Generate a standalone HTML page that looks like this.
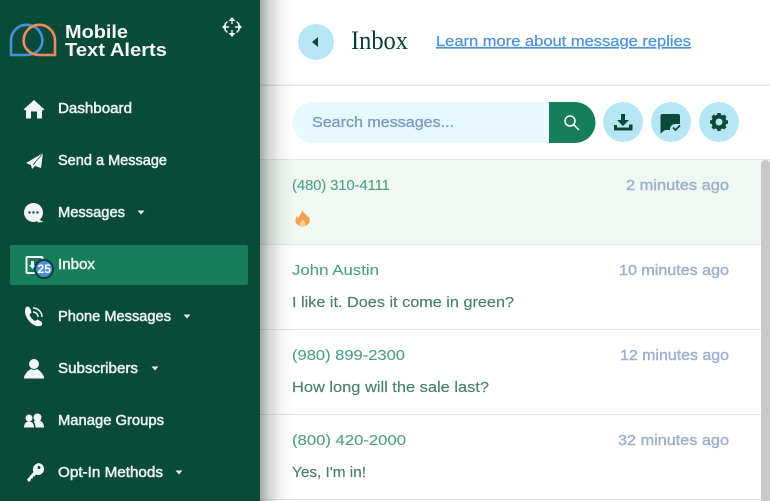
<!DOCTYPE html>
<html><head><meta charset="utf-8"><style>
html,body{margin:0;padding:0;width:770px;height:501px;overflow:hidden;background:#fff}
svg{display:block}
text{font-family:"Liberation Sans",sans-serif}
.m{font-size:15px;fill:#e9f1ee;stroke:#e9f1ee;stroke-width:.55px}
.n{font-size:15px;fill:#4f9f88;stroke:#4f9f88;stroke-width:.1px}
.t{font-size:15px;fill:#9db0cc;stroke:#9db0cc;stroke-width:.4px}
.b{font-size:15px;fill:#4a7d6e;stroke:#4a7d6e;stroke-width:.15px}
</style></head><body>
<svg width="770" height="501" viewBox="0 0 770 501" xmlns="http://www.w3.org/2000/svg">
<defs><linearGradient id="s" x1="0" x2="1" y1="0" y2="0">
<stop offset="0" stop-color="#000" stop-opacity=".34"/><stop offset=".25" stop-color="#000" stop-opacity=".18"/><stop offset=".6" stop-color="#000" stop-opacity=".05"/><stop offset="1" stop-color="#000" stop-opacity="0"/></linearGradient></defs>
<rect width="770" height="501" fill="#fff"/>
<!-- header -->
<circle cx="316" cy="42" r="18" fill="#b6e6f3"/>
<path d="M312 42l6-5v10z" fill="#0a4a38"/>
<text x="351" y="49" font-size="26" textLength="57" lengthAdjust="spacingAndGlyphs" style='font-family:"Liberation Serif",serif' fill="#0a3f33">Inbox</text>
<text x="436" y="46" font-size="15" textLength="255" lengthAdjust="spacingAndGlyphs" fill="#4f93d8" stroke="#4f93d8" stroke-width=".25" text-decoration="underline">Learn more about message replies</text>
<rect x="260" y="84.5" width="510" height="1.5" fill="#e3e8e6"/>
<!-- search -->
<path d="M313 102H549V143H313a20.500 20.500 0 0 1 0-41z" fill="#e6f9fe"/>
<text x="312" y="127" font-size="15" textLength="142" lengthAdjust="spacingAndGlyphs" fill="#7d9bbd" stroke="#7d9bbd" stroke-width=".35">Search messages...</text>
<path d="M549 102h26a20.500 20.500 0 0 1 0 41h-26z" fill="#177e5c"/>
<circle cx="570" cy="121" r="5" fill="none" stroke="#fff" stroke-width="1.500"/>
<path d="M574 125l5 5" stroke="#fff" stroke-width="1.500"/>
<circle cx="623" cy="122" r="20" fill="#b6e6f3"/>
<circle cx="671" cy="122" r="20" fill="#b6e6f3"/>
<circle cx="719" cy="122" r="20" fill="#b6e6f3"/>
<path d="M621 114h4v6h4l-6 6-6-6h4zM614 125h3v2.500h12v-3h3.500v6h-18.500z" fill="#0a4a38"/>
<path d="M664 114h14a2 2 0 0 1 2 2v8h-5a5 5 0 0 0-5 5v1h-5l-4.500 3.500v-17.500a2 2 0 0 1 2-2z" fill="#0a4a38"/>
<path d="M673 127.500l2.500 2.500 4.500-4.500" fill="none" stroke="#0a4a38" stroke-width="1.700"/>
<circle cx="719" cy="122" r="5.500" fill="none" stroke="#0a4a38" stroke-width="4"/>
<g stroke="#0a4a38" stroke-width="3.500"><path d="M719 113v3M719 128v3M710 122h3M725 122h3M712.600 115.600l2 2M723.400 126.400l2 2M725.400 115.600l-2 2M714.600 126.400l-2 2"/></g>
<!-- rows -->
<rect x="260" y="159" width="510" height="1" fill="#e3e5e5"/>
<rect x="260" y="160" width="510" height="84" fill="#f0f8f2"/>
<g fill="#e3e7e7"><rect x="260" y="244" width="510" height="1"/><rect x="260" y="329" width="510" height="1"/><rect x="260" y="414" width="510" height="1"/><rect x="260" y="499" width="510" height="1"/></g>
<text class="n" x="292" y="190" textLength="98" lengthAdjust="spacing">(480) 310-4111</text>
<text class="t" x="626" y="190" textLength="103" lengthAdjust="spacingAndGlyphs">2 minutes ago</text>
<path d="M302 210c1 3 5 4 6 8 .6-.6 .8-1.500 .8-2 1 2 1.200 4 .7 6a7.300 6 0 0 1-14 0c-.4-2 .3-4 1.500-6 0 1 .6 2 1 2.500 1-3 4-5 4-8.500z" fill="#f2a04f"/>
<path d="M303 219c0 2 2.500 3 2.500 5a3 3 0 0 1-6 0c0-2 3-2.500 3.500-5z" fill="#f9d48a"/>
<text class="n" x="292" y="275" textLength="87" lengthAdjust="spacingAndGlyphs">John Austin</text>
<text class="t" x="619" y="275" textLength="110" lengthAdjust="spacingAndGlyphs">10 minutes ago</text>
<text class="b" x="292" y="307" textLength="222" lengthAdjust="spacingAndGlyphs">I like it. Does it come in green?</text>
<text class="n" x="292" y="360" textLength="113" lengthAdjust="spacingAndGlyphs">(980) 899-2300</text>
<text class="t" x="620" y="360" textLength="109" lengthAdjust="spacingAndGlyphs">12 minutes ago</text>
<text class="b" x="292" y="392" textLength="197" lengthAdjust="spacingAndGlyphs">How long will the sale last?</text>
<text class="n" x="292" y="445" textLength="114" lengthAdjust="spacingAndGlyphs">(800) 420-2000</text>
<text class="t" x="618" y="445" textLength="111" lengthAdjust="spacingAndGlyphs">32 minutes ago</text>
<text class="b" x="292" y="477" textLength="74" lengthAdjust="spacingAndGlyphs">Yes, I'm in!</text>
<path d="M761 501V164a4 4 0 0 1 4-4h1a4 4 0 0 1 4 4v337z" fill="#c9c9c9"/>
<!-- shadow -->
<rect x="260" y="0" width="34" height="501" fill="url(#s)"/>
<!-- sidebar -->
<rect width="260" height="501" fill="#0a4a38"/>
<path d="M11 55V40.500a15.700 15.700 0 0 1 31.400 0 15.700 14.500 0 0 1-15.700 14.500z" fill="none" stroke="#4a90d9" stroke-width="2.600"/>
<path d="M55 55V40.500a15.700 15.700 0 0 0-31.400 0 15.700 14.500 0 0 0 15.700 14.500z" fill="none" stroke="#f28a62" stroke-width="2.600"/>
<text x="65" y="38" font-size="18.500" font-weight="700" fill="#f5f7f2" textLength="63" lengthAdjust="spacingAndGlyphs">Mobile</text>
<text x="65" y="56" font-size="18.500" font-weight="700" fill="#f5f7f2" textLength="102" lengthAdjust="spacingAndGlyphs">Text Alerts</text>
<g fill="none" stroke="#e9f1ee" stroke-width="1.400"><path d="M232 21v3M232 30v3M226 27h3M235 27h3M227.500 21.500l-3 3M236.500 21.500l3 3M227.500 32.500l-3-3M236.500 32.500l3-3"/></g>
<g fill="#e9f1ee"><path d="M232 17l3.500 4h-7zM232 37l3.500-4h-7zM222 27l4-3.500v7zM242 27l-4-3.500v7z"/></g>
<rect x="10" y="245" width="238" height="40" rx="2" fill="#177e5c"/>
<!-- icons -->
<g fill="#f1f6f4">
<path d="M34 100l10.500 9.500-2.500 1V118.500h-5v-7h-6v7h-5v-8l-2.500-1z"/>
<path d="M43 153l-17 10 5 2 1 4 3-3 6 2z"/>
<circle cx="33.500" cy="212.500" r="9.500"/><path d="M38 219l5.500 3-6 .5z"/>
<circle cx="34" cy="364" r="5"/><path d="M24 378.500c0-1 0-2 1-3.500 1.500-3 4-5 6-6a6 6 0 0 0 6 0c2 1 4.500 3 6 6 1 1.500 1 2.500 1 3.500z"/>
<circle cx="29" cy="418" r="3.500"/><circle cx="37.500" cy="417.500" r="4"/>
<path d="M24 427.500c0-4 2-6 5-6s5 2 5 6z"/><path d="M35.500 427.500c0-3-1-5-2-6 1-.6 3-1 4.500-1 4 0 6 3 6 7z"/>
<path fill-rule="evenodd" d="M37.500 463a6 6 0 0 1 1 12c-1 0-2-.3-2.500-.5l-1.500 2-1.500 0-.3 2-1.700.3-.3 1.700-2 1.500-1.700-2.500 6.500-7.500a6 6 0 0 1 4-8.500zM39 466a1.500 1.500 0 1 0 .01 0z"/>
<path d="M26 307c2-1 3.500 0 4.500 2l1 3.500-2 2c1 3 3 5 5.500 6.500l2.500-1.500 3.500 2c1.500 1 1.500 3 .5 4-8 4-20-10-15.500-18.500z"/>
</g>
<path d="M43 153l-10 12" stroke="#0a4a38" stroke-width=".7"/>
<g fill="none" stroke="#f1f6f4" stroke-width="1.500"><path d="M33 308a9 9 0 0 1 9 9M33 312a5 5 0 0 1 5 5"/></g>
<rect x="26.500" y="257" width="16" height="16" rx="1" fill="none" stroke="#f1f6f4" stroke-width="2"/>
<path d="M31 261h3v4h2l-3.500 4-3.500-4h2z" fill="#f1f6f4"/>
<g fill="#0a4a38"><circle cx="29.500" cy="212.500" r="1.200"/><circle cx="33.500" cy="212.500" r="1.200"/><circle cx="37.500" cy="212.500" r="1.200"/></g>
<circle cx="44" cy="269" r="9" fill="#4a90d9" stroke="#0f3f3a" stroke-width="2"/>
<text x="37.500" y="273" font-size="11.500" font-weight="700" fill="#fff" textLength="13.500" lengthAdjust="spacingAndGlyphs">25</text>
<!-- menu -->
<text class="m" x="58" y="113" textLength="74" lengthAdjust="spacingAndGlyphs">Dashboard</text>
<text class="m" x="58" y="165" textLength="109" lengthAdjust="spacingAndGlyphs">Send a Message</text>
<text class="m" x="58" y="217" textLength="67" lengthAdjust="spacingAndGlyphs">Messages</text>
<text class="m" x="58" y="269" textLength="37" lengthAdjust="spacingAndGlyphs">Inbox</text>
<text class="m" x="58" y="321" textLength="113" lengthAdjust="spacingAndGlyphs">Phone Messages</text>
<text class="m" x="58" y="373" textLength="80" lengthAdjust="spacingAndGlyphs">Subscribers</text>
<text class="m" x="58" y="425" textLength="106" lengthAdjust="spacingAndGlyphs">Manage Groups</text>
<text class="m" x="58" y="477" textLength="105" lengthAdjust="spacingAndGlyphs">Opt-In Methods</text>
<g fill="#e9f1ee"><path d="M137.500 210.500h7l-3.500 4zM183.500 314.500h7l-3.500 4zM151.500 366.500h7l-3.500 4zM175.500 470.500h7l-3.500 4z"/></g>
</svg>
</body></html>
